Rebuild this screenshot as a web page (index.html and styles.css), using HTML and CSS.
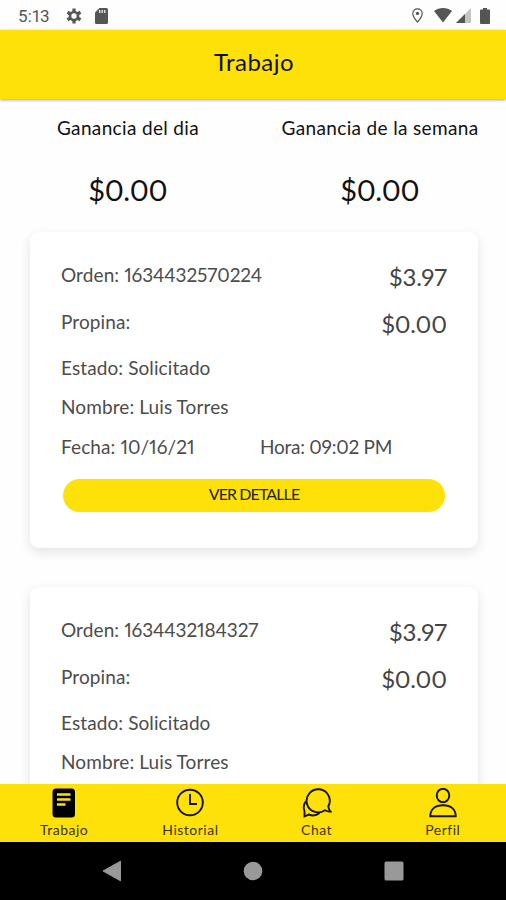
FILE: index.html
```html
<!DOCTYPE html>
<html lang="es">
<head>
    <meta charset="UTF-8">
    <meta name="viewport" content="width=device-width, initial-scale=1.0">
    <title>Trabajo</title>
    <link rel="stylesheet" href="styles.css">
</head>
<body>

<div class="status">
    <span class="clock">5:13</span>
    <svg class="gear" width="16" height="16" viewBox="0 0 16 16">
        <circle cx="8" cy="8" r="4" fill="none" stroke="#555" stroke-width="2.6"/>
        <path d="M8 .5v3M8 12.5v3M1.5 4.25l2.6 1.5M11.9 10.25l2.6 1.5M1.5 11.75l2.6-1.5M11.9 5.75l2.6-1.5" stroke="#555" stroke-width="3.2"/>
    </svg>
    <svg class="sdcard" width="13" height="16" viewBox="0 0 13 16">
        <path d="M4.5 0H11.5a1.5 1.5 0 0 1 1.5 1.5V14.5a1.5 1.5 0 0 1-1.5 1.5H1.5A1.5 1.5 0 0 1 0 14.5V4.5z" fill="#555"/>
        <path d="M4.7 2v3M7.2 2v3M9.7 2v3" stroke="#ddd" stroke-width="1.5"/>
    </svg>
    <svg class="pin" width="11" height="15" viewBox="0 0 11 15">
        <path d="M5.5 .8C2.8 .8 .8 2.8 .8 5.4c0 3.3 4.7 8.6 4.7 8.6s4.7-5.3 4.7-8.6C10.2 2.8 8.2 .8 5.5 .8z" fill="none" stroke="#555" stroke-width="1.2"/>
        <circle cx="5.5" cy="5.4" r="1.7" fill="#555"/>
    </svg>
    <svg class="wifi" width="18" height="15" viewBox="0 0 18 15">
        <path d="M0 3C5-1 13-1 18 3L9 14.5z" fill="#555"/>
    </svg>
    <svg class="signal" width="15" height="15" viewBox="0 0 15 15">
        <path d="M15 0v15H0z" fill="#c4c4c4"/>
        <path d="M9 6v9H0z" fill="#555"/>
    </svg>
    <svg class="battery" width="10" height="16" viewBox="0 0 10 16">
        <path d="M3 0h4v1.6h2.2a.8.8 0 0 1 .8.8v12.8a.8.8 0 0 1-.8.8H.8a.8.8 0 0 1-.8-.8V2.4a.8.8 0 0 1 .8-.8H3z" fill="#555"/>
    </svg>
</div>

<header class="header">
    <h1>Trabajo</h1>
</header>

<main class="content">
    <section class="earnings">
        <div class="earning">
            <p class="earning-label">Ganancia del dia</p>
            <p class="earning-amount">$0.00</p>
        </div>
        <div class="earning">
            <p class="earning-label">Ganancia de la semana</p>
            <p class="earning-amount">$0.00</p>
        </div>
    </section>

    <article class="card">
        <div class="row big"><span>Orden: <span class="number">1634432570224</span></span><span class="price">$3.97</span></div>
        <div class="row big"><span>Propina:</span><span class="price">$0.00</span></div>
        <div class="row first">Estado: Solicitado</div>
        <div class="row">Nombre: Luis Torres</div>
        <div class="row two"><span>Fecha: 10/16/21</span><span class="time">Hora: 09:02 PM</span></div>
        <button class="button">VER DETALLE</button>
    </article>

    <article class="card">
        <div class="row big"><span>Orden: <span class="number">1634432184327</span></span><span class="price">$3.97</span></div>
        <div class="row big"><span>Propina:</span><span class="price">$0.00</span></div>
        <div class="row first">Estado: Solicitado</div>
        <div class="row">Nombre: Luis Torres</div>
    </article>
</main>

<nav class="tabs">
    <a class="tab">
        <svg width="32" height="30" viewBox="0 0 32 30">
            <rect x="4.5" y="0.5" width="22.5" height="29" rx="3.5"/>
            <path d="M9 6.5h13.5M9 11.5h13.5M9 16.5h8.5" stroke="#ffe10a" stroke-width="2.7"/>
        </svg>
        <span>Trabajo</span>
    </a>
    <a class="tab">
        <svg class="line" width="32" height="30" viewBox="0 0 32 30">
            <circle cx="16" cy="14.5" r="12.8"/>
            <path d="M16 6v10h7"/>
        </svg>
        <span>Historial</span>
    </a>
    <a class="tab">
        <svg class="line" width="32" height="30" viewBox="0 0 32 30">
            <path d="M27.3 18.5A11.6 11.6 0 1 0 24 22.2c2 1.2 3.8 1.5 5.5 1.3-1.3-1.5-2-3-2.2-5z"/>
            <path d="M5 13c-3 4-2.5 7.5-1.5 10v5.3l4.3-1.8c3.7 1.5 7.7 1 10.7-1.5"/>
        </svg>
        <span>Chat</span>
    </a>
    <a class="tab">
        <svg class="line" width="32" height="30" viewBox="0 0 32 30">
            <ellipse cx="16" cy="7.5" rx="6.3" ry="6.7"/>
            <path d="M3.3 28.3c0-7 4.7-11 12.7-11s12.7 4 12.7 11z"/>
        </svg>
        <span>Perfil</span>
    </a>
</nav>

<div class="navbar">
    <svg width="20" height="22" viewBox="0 0 20 22"><path d="M1 11L18.5 1.2V20.8z" fill="#999" stroke="#999" stroke-linejoin="round"/></svg>
    <svg width="20" height="20" viewBox="0 0 20 20"><circle cx="10" cy="10" r="9.3" fill="#999"/></svg>
    <svg width="20" height="20" viewBox="0 0 20 20"><rect x="0.5" y="0.5" width="19" height="19" rx="1.5" fill="#999"/></svg>
</div>

</body>
</html>
```
FILE: styles.css
```css
* {
    box-sizing: border-box;
}
body {
    margin: 0;
    height: 900px;
    display: flex;
    flex-direction: column;
    overflow: hidden;
    background-color: #fefefe;
    font-family: Lato, "Open Sans", sans-serif;
    font-variant-numeric: proportional-nums;
    color: #111;
}
h1, p {
    margin: 0;
    font-weight: normal;
}
.status {
    flex: none;
    height: 30px;
    padding: 1px 16px 0 18px;
    display: flex;
    align-items: center;
    color: #555;
}
.clock {
    width: 48px;
    font-family: Roboto, sans-serif;
    font-size: 17px;
    letter-spacing: 0.3px;
}
.sdcard {
    margin-left: 13px;
}
.pin {
    margin-left: auto;
}
.wifi {
    margin-left: 11px;
}
.signal {
    margin-left: 4px;
}
.battery {
    margin-left: 9px;
}
.header {
    flex: none;
    height: 69px;
    padding-left: 2px;
    display: flex;
    justify-content: center;
    background-color: #ffe10a;
    box-shadow: 0 1px 3px rgba(60, 60, 110, 0.5);
    position: relative;
}
h1 {
    font-size: 24px;
    line-height: 64px;
    letter-spacing: 0.5px;
}
.content {
    flex: 1;
    min-height: 0;
    overflow: hidden;
}
.earnings {
    display: grid;
    grid-template-columns: 1fr 1fr;
    height: 133px;
    padding-left: 2px;
    text-align: center;
}
.earning-label {
    margin-top: 17px;
    font-size: 19px;
    line-height: 24px;
    letter-spacing: 0.35px;
    white-space: nowrap;
}
.earning-amount {
    margin-top: 32px;
    font-size: 29px;
    line-height: 36px;
    letter-spacing: -0.2px;
}
.card {
    height: 316px;
    margin: 0 28px 39px 30px;
    padding: 19px 31px 0;
    border-radius: 9px;
    background-color: #fff;
    box-shadow: 0 4px 12px rgba(0, 0, 0, 0.11);
    color: #4c4c4c;
}
.row {
    height: 39.5px;
    display: flex;
    align-items: center;
    font-size: 19px;
    line-height: 24px;
    letter-spacing: 0.1px;
    white-space: nowrap;
}
.row.big {
    height: 47px;
    justify-content: space-between;
}
.row.first {
    margin-top: 3px;
}
.number {
    letter-spacing: -0.1px;
}
.price {
    margin-top: 4px;
    font-size: 24px;
    letter-spacing: -0.1px;
    color: #444;
}
.row.two {
    display: grid;
    grid-template-columns: 199px 1fr;
}
.time {
    letter-spacing: -0.25px;
}
.button {
    display: block;
    width: 382px;
    height: 33px;
    margin: 12px 0 0 2px;
    padding: 0 0 4px;
    border: none;
    border-radius: 17px;
    background-color: #ffe10a;
    font-family: inherit;
    font-size: 16px;
    letter-spacing: -0.9px;
    color: #222;
}
.tabs {
    flex: none;
    height: 58px;
    padding: 4px 0 0 1px;
    display: grid;
    grid-template-columns: repeat(4, 1fr);
    background-color: #ffe10a;
    position: relative;
}
.tab {
    display: flex;
    flex-direction: column;
    align-items: center;
    font-size: 14px;
    line-height: 18px;
    letter-spacing: 0.5px;
    color: #3b3500;
}
.tab span {
    margin-top: 3px;
}
.line {
    fill: none;
    stroke: #151300;
    stroke-width: 1.9;
}
.navbar {
    flex: none;
    height: 58px;
    padding: 0 102px;
    display: flex;
    align-items: center;
    justify-content: space-between;
    background-color: #000;
}
```
